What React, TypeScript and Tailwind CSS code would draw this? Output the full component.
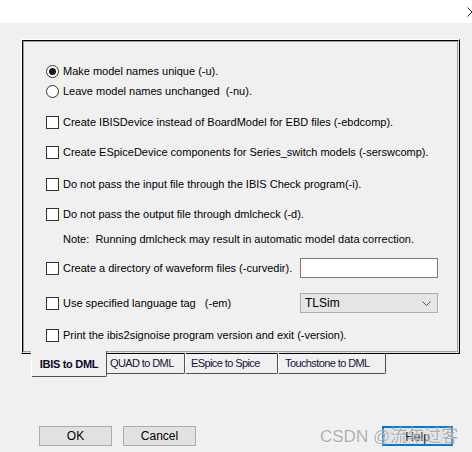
import React from 'react';

const font = { fontFamily: '"Liberation Sans", Arial, sans-serif' };

function Radio({ checked }: { checked?: boolean }) {
  return (
    <span className="flex h-[13px] w-[13px] shrink-0 items-center justify-center rounded-full border border-[#333] bg-white">
      {checked && <span className="h-[7px] w-[7px] rounded-full bg-[#1a1a1a]" />}
    </span>
  );
}

function Box() {
  return <span className="h-[13px] w-[13px] shrink-0 border border-[#333] bg-white" />;
}

function Row({ kind, label, mt, children }: { kind: 'radio' | 'radio-on' | 'box'; label: string; mt: string; children?: React.ReactNode }) {
  return (
    <div className={`flex h-[20px] items-center pr-[19px] ${mt}`}>
      {kind === 'box' ? <Box /> : <Radio checked={kind === 'radio-on'} />}
      <span className="ml-[4px] whitespace-pre">{label}</span>
      {children}
    </div>
  );
}

export default function App() {
  return (
    <div className="relative h-[452px] w-[472px] overflow-hidden bg-[#f0f0f0] text-[11px] text-black" style={font}>
      <div className="flex h-[23px] items-center justify-end bg-white">
        <svg width="10" height="10" viewBox="0 0 10 10" className="mr-[-5px]">
          <path d="M0.5 0.5 L9.5 9.5 M9.5 0.5 L0.5 9.5" stroke="#222" strokeWidth="1" fill="none" />
        </svg>
      </div>

      <div className="ml-[21px] mt-[16px] w-[439px] border border-l-white border-t-white border-r-black border-b-black">
        <div className="border border-l-black border-t-black border-r-[#e3e3e3] border-b-[#e3e3e3]">
          <div className="h-[311px] border border-[#a0a0a0] pl-[22px] pt-[19px]">
            <Row kind="radio-on" label="Make model names unique (-u)." mt="mt-0" />
            <Row kind="radio" label="Leave model names unchanged  (-nu)." mt="mt-0" />
            <Row kind="box" label="Create IBISDevice instead of BoardModel for EBD files (-ebdcomp)." mt="mt-[11px]" />
            <Row kind="box" label="Create ESpiceDevice components for Series_switch models (-serswcomp)." mt="mt-[10px]" />
            <Row kind="box" label="Do not pass the input file through the IBIS Check program(-i)." mt="mt-[12px]" />
            <Row kind="box" label="Do not pass the output file through dmlcheck (-d)." mt="mt-[10px]" />
            <div className="mt-[5px] flex h-[20px] items-center pl-[17px] whitespace-pre">
              Note:  Running dmlcheck may result in automatic model data correction.
            </div>
            <Row kind="box" label="Create a directory of waveform files (-curvedir)." mt="mt-[9px]">
              <input className="ml-auto h-[20px] w-[138px] border border-[#7a7a7a] bg-white outline-none" />
            </Row>
            <Row kind="box" label="Use specified language tag   (-em)" mt="mt-[15px]">
              <div className="ml-auto flex h-[20px] w-[138px] items-center justify-between border border-[#adadad] bg-[#e5e5e5] pl-[4px] pr-[6px] text-[12px]">
                <span>TLSim</span>
                <svg width="9" height="5" viewBox="0 0 9 5">
                  <path d="M0.5 0.5 L4.5 4.5 L8.5 0.5" stroke="#555" strokeWidth="1" fill="none" />
                </svg>
              </div>
            </Row>
            <Row kind="box" label="Print the ibis2signoise program version and exit (-version)." mt="mt-[12px]" />
          </div>
        </div>
      </div>

      <div className="relative -mt-[3px] ml-[31px] flex items-start text-[#14143a]">
        <div className="z-10 flex h-[26px] w-[76px] items-center justify-center rounded-b-[2px] border-b border-l border-r border-b-[#505050] border-l-white border-r-[#505050] bg-[#f0f0f0] pt-[2px] text-[11px] font-bold tracking-[-0.3px] text-[#0a0a2a]">
          IBIS to DML
        </div>
        <div className="mt-[2px] flex h-[21px] w-[78px] items-center rounded-br-[2px] border-b border-r border-[#505050] pl-[3px] tracking-[-0.6px]">
          QUAD to DML
        </div>
        <div className="mt-[2px] flex h-[21px] w-[93px] items-center rounded-br-[2px] border-b border-l border-r border-b-[#505050] border-l-white border-r-[#505050] pl-[5px] tracking-[-0.6px]">
          ESpice to Spice
        </div>
        <div className="mt-[2px] flex h-[21px] w-[108px] items-center rounded-br-[2px] border-b border-l border-r border-b-[#505050] border-l-white border-r-[#505050] pl-[6px] tracking-[-0.6px]">
          Touchstone to DML
        </div>
      </div>

      <div className="mt-[49px] flex pl-[39px] pr-[19px] text-[12px]">
        <button className="h-[20px] w-[73px] border border-[#adadad] bg-[#e1e1e1]">OK</button>
        <button className="ml-[11px] h-[20px] w-[73px] border border-[#adadad] bg-[#e1e1e1]">Cancel</button>
        <button className="ml-auto h-[20px] w-[71px] border-2 border-[#0078d7] bg-[#e1e1e1]">Help</button>
      </div>

      <div
        className="absolute left-[320px] top-[424px] whitespace-nowrap text-[17px] text-[#9a9a9a]/80 [text-shadow:0_0_2px_#fff]"
        style={{ fontFamily: '"Liberation Sans", "Noto Sans CJK SC", sans-serif' }}
      >
        CSDN @流年过客
      </div>
    </div>
  );
}
